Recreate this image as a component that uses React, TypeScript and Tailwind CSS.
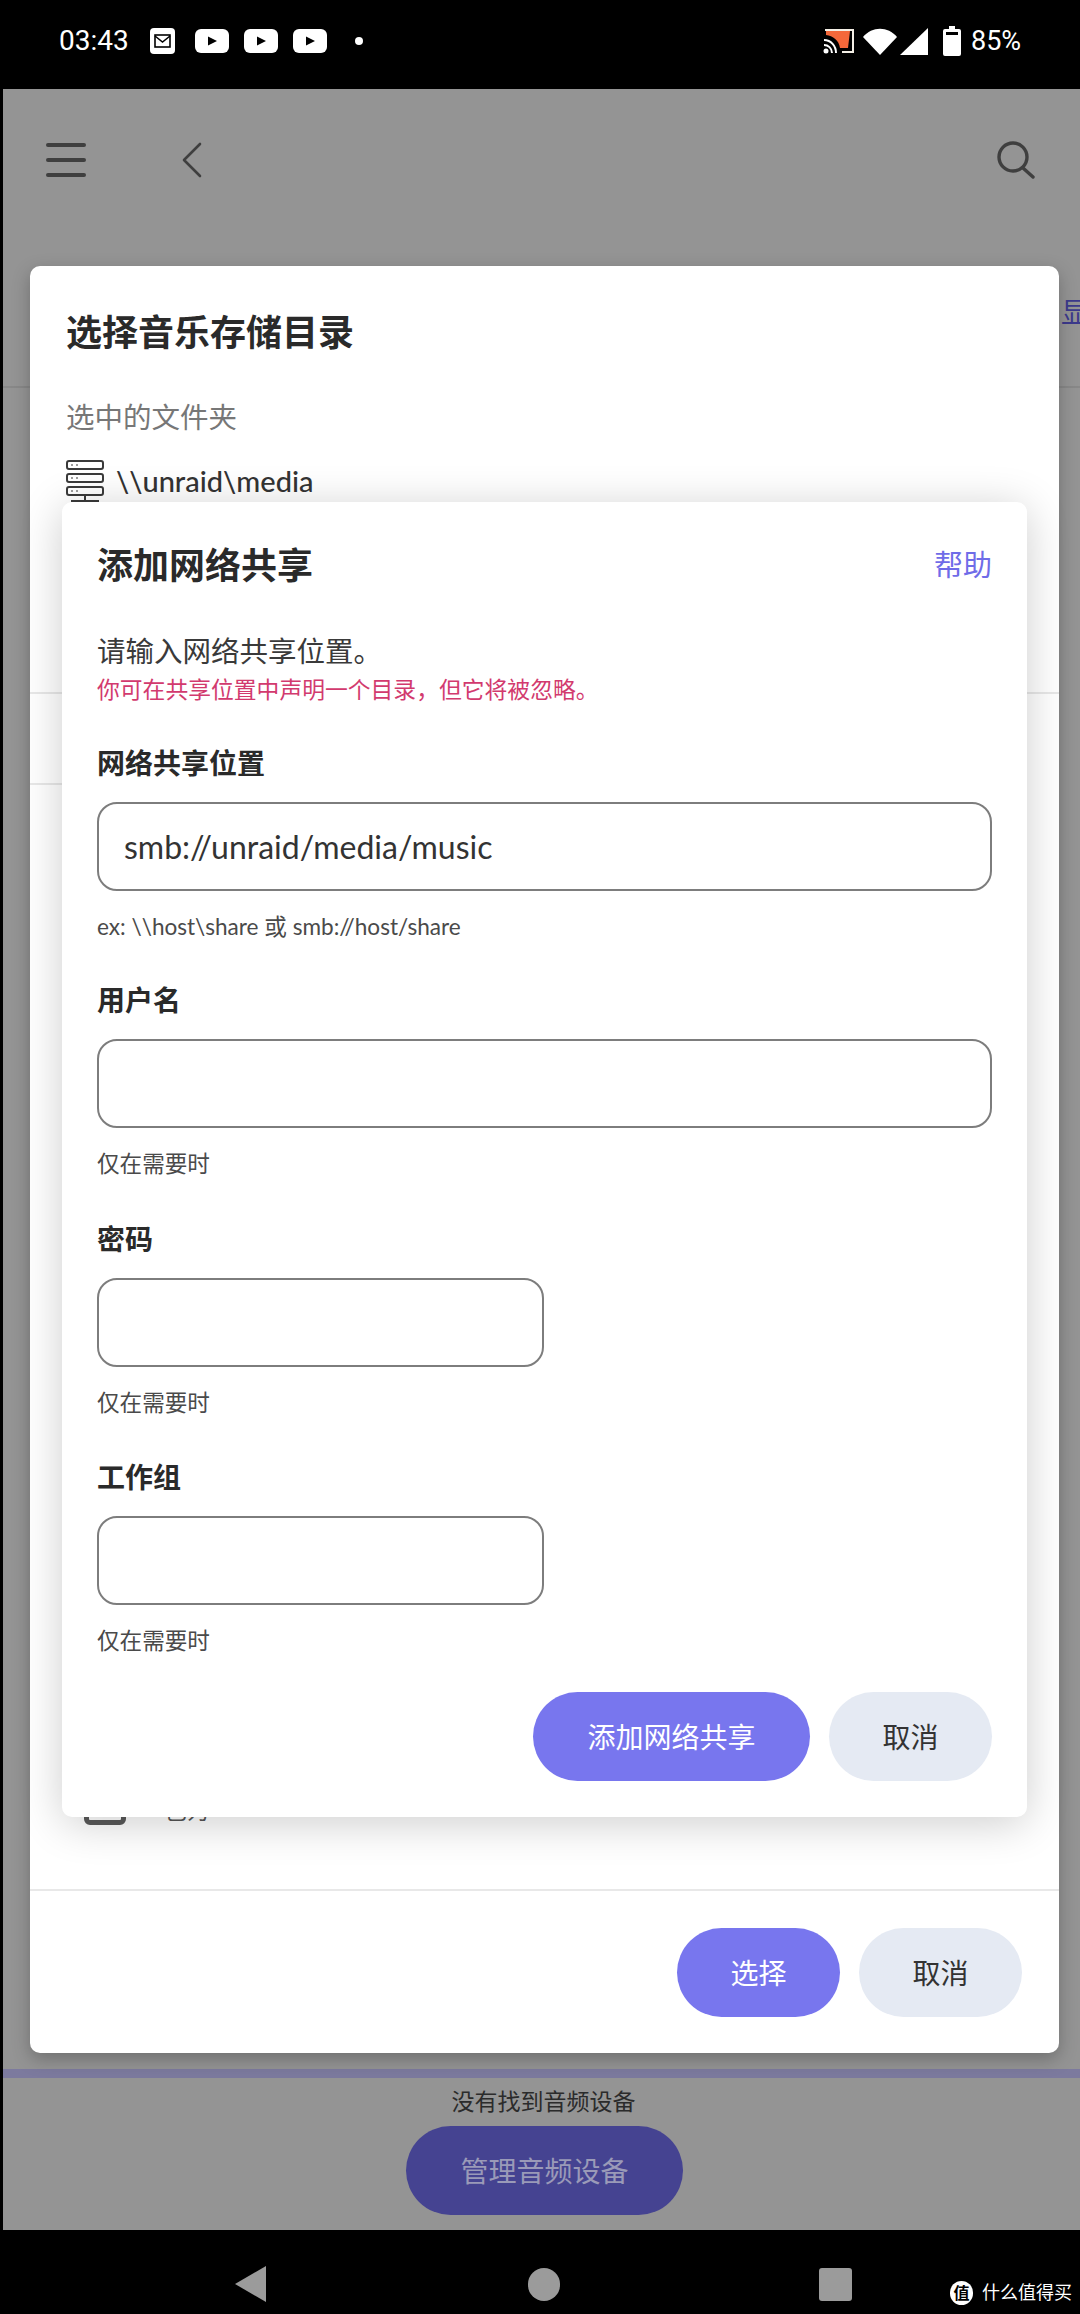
import React from "react";

const FONT = "font-['Lato','Noto_Sans_CJK_SC',sans-serif]";

function YoutubeIcon() {
  return (
    <svg width="34" height="24" viewBox="0 0 34 24">
      <rect width="34" height="24" rx="6" fill="#fff" />
      <path d="M13 7.5 L22 12 L13 16.5 Z" fill="#000" />
    </svg>
  );
}

function StatusBar() {
  return (
    <div className="h-[89px] shrink-0 flex items-center pl-[59px] pr-[57px] pb-[7px] text-white font-['Roboto',sans-serif]">
      <span className="w-[67px] text-[28px] leading-none whitespace-nowrap">03:43</span>
      <svg className="ml-[24px]" width="25" height="26" viewBox="0 0 25 26">
        <rect width="25" height="26" rx="4" fill="#fff" />
        <rect x="5" y="7" width="15" height="12" fill="none" stroke="#000" strokeWidth="1.6" />
        <path d="M5 8 L12.5 14 L20 8" fill="none" stroke="#000" strokeWidth="1.6" />
      </svg>
      <div className="ml-[20px] flex gap-[15px]">
        <YoutubeIcon />
        <YoutubeIcon />
        <YoutubeIcon />
      </div>
      <div className="ml-[28px] w-[8px] h-[8px] rounded-full bg-white" />
      <div className="ml-auto flex items-center">
        <svg width="31" height="26" viewBox="0 0 31 26">
          <path d="M2 2 H30 V24 H19" fill="none" stroke="#f4efe6" strokeWidth="2" />
          <path d="M3 3 H27 L25 20 H17 C16 12 10 8 3 7 Z" fill="#f4683a" />
          <path d="M1 12 C8 12 13 18 13 25 M1 17 C5 17 9 20 9 25" fill="none" stroke="#fff" strokeWidth="2" />
          <circle cx="3" cy="23" r="2.5" fill="#fff" />
        </svg>
        <svg className="ml-[9px]" width="34" height="27" viewBox="0 0 34 27">
          <path d="M0 9 C9 -2 25 -2 34 9 L17 27 Z" fill="#fff" />
        </svg>
        <svg className="ml-[3px]" width="28" height="27" viewBox="0 0 28 27">
          <path d="M28 0 V27 H0 Z" fill="#fff" />
        </svg>
        <svg className="ml-[15px]" width="18" height="30" viewBox="0 0 18 30">
          <path d="M6 0 H12 V3 H16 Q18 3 18 5 V28 Q18 30 16 30 H2 Q0 30 0 28 V5 Q0 3 2 3 H6 Z" fill="#fff" />
          <rect x="3" y="6" width="12" height="3" fill="#000" />
        </svg>
        <span className="ml-[10px] w-[52px] text-[27px] leading-none whitespace-nowrap">85%</span>
      </div>
    </div>
  );
}

function ServerIcon() {
  return (
    <svg width="38" height="42" viewBox="0 0 38 42" fill="none" stroke="#3a3a3a" strokeWidth="2">
      <rect x="1" y="1" width="36" height="8" rx="2" />
      <rect x="1" y="14" width="36" height="8" rx="2" />
      <rect x="1" y="27" width="36" height="8" rx="2" />
      <path d="M19 36 V41 M5 41 H33" />
      <path d="M5 5 H7 M10 5 H12 M5 18 H7 M10 18 H12 M5 31 H7 M10 31 H12" strokeWidth="1" />
    </svg>
  );
}

function PillButton({ label, primary, width }: { label: string; primary?: boolean; width: string }) {
  return (
    <button
      className={`h-[89px] rounded-[45px] text-[28px] ${width} ${
        primary ? "bg-[#7876ee] text-white" : "bg-[#e5eaf3] text-[#333333]"
      }`}
    >
      {label}
    </button>
  );
}

function Field({
  label,
  hint,
  value,
  inputWidth,
  className,
}: {
  label: string;
  hint: string;
  value?: string;
  inputWidth: string;
  className: string;
}) {
  return (
    <div className={className}>
      <div className="text-[28px] leading-[36px] font-semibold text-[#2a2a2a]">{label}</div>
      <div
        className={`mt-[21px] h-[89px] border-2 border-[#7d7d7d] rounded-[20px] pl-[25px] flex items-center text-[32px] text-[#333333] ${inputWidth}`}
      >
        {value}
      </div>
      <div className="mt-[21px] text-[22.6px] leading-[30px] text-[#4a4a4a]">{hint}</div>
    </div>
  );
}

function AddShareDialog() {
  return (
    <div className="absolute left-[32px] top-[236px] w-[965px] h-[1315px] bg-white rounded-[10px] px-[35px] pt-[38px] shadow-[0_6px_44px_rgba(0,0,0,0.2)]">
      <div className="flex items-center justify-between h-[50px]">
        <span className="text-[36px] font-semibold text-[#2a2a2a]">添加网络共享</span>
        <span className="text-[29px] text-[#6f6ce8]">帮助</span>
      </div>
      <div className="mt-[43px] text-[28.5px] leading-[36px] text-[#3a3a3a]">请输入网络共享位置。</div>
      <div className="mt-[5px] text-[22.8px] leading-[30px] text-[#d23a6e]">你可在共享位置中声明一个目录，但它将被忽略。</div>
      <Field
        className="mt-[41px]"
        label="网络共享位置"
        value="smb://unraid/media/music"
        hint="ex: \\host\share 或 smb://host/share"
        inputWidth="w-full"
      />
      <Field className="mt-[40px]" label="用户名" hint="仅在需要时" inputWidth="w-full" />
      <Field className="mt-[42px]" label="密码" hint="仅在需要时" inputWidth="w-[447px]" />
      <Field className="mt-[41px]" label="工作组" hint="仅在需要时" inputWidth="w-[447px]" />
      <div className="mt-[36px] flex justify-end gap-[19px]">
        <PillButton label="添加网络共享" primary width="w-[277px]" />
        <PillButton label="取消" width="w-[163px]" />
      </div>
    </div>
  );
}

function FolderDialog() {
  return (
    <div className="absolute left-[30px] top-[266px] w-[1029px] h-[1787px] bg-white rounded-[10px] flex flex-col shadow-[0_6px_18px_rgba(0,0,0,0.25)]">
      <div className="px-[36px] pt-[41px]">
        <div className="h-[50px] flex items-center text-[36px] font-semibold text-[#2a2a2a]">选择音乐存储目录</div>
        <div className="mt-[42px] text-[28.5px] leading-[36px] text-[#777777]">选中的文件夹</div>
        <div className="mt-[25px] flex items-center gap-[12px] h-[42px]">
          <ServerIcon />
          <span className="text-[29px] font-medium text-[#333333]">\\unraid\media</span>
        </div>
      </div>
      <div className="h-[192px] border-b-2 border-[#e8e8e8]" />
      <div className="h-[91px] mr-[600px] border-b-2 border-[#e8e8e8]" />
      <div className="mt-auto mb-[64px] ml-[54px] flex items-end gap-[39px]">
        <div className="w-[42px] h-[42px] border-[5px] border-[#5a5a5a] rounded-[6px]" />
        <span className="text-[22px] leading-[28px] text-[#555555]">已为</span>
      </div>
      <div className="h-[164px] border-t-2 border-[#e8e8e8] pt-[37px] pr-[37px] flex justify-end gap-[19px]">
        <PillButton label="选择" primary width="w-[163px]" />
        <PillButton label="取消" width="w-[163px]" />
      </div>
      <AddShareDialog />
    </div>
  );
}

function NavBar() {
  return (
    <div className="h-[84px] shrink-0 flex items-center pt-[24px] relative">
      <svg className="ml-[235px]" width="31" height="36" viewBox="0 0 31 36">
        <path d="M31 0 V36 L0 18 Z" fill="#9b9b9b" />
      </svg>
      <div className="ml-[262px] w-[32px] h-[33px] rounded-full bg-[#9b9b9b]" />
      <div className="ml-[259px] w-[33px] h-[33px] rounded-[3px] bg-[#9b9b9b]" />
      {/* 水印 */}
      <div className="absolute left-[950px] top-[49px] flex items-center gap-[9px]">
        <div className="w-[23px] h-[24px] rounded-full bg-white flex items-center justify-center text-[16px] leading-none font-bold text-black">
          值
        </div>
        <span className="text-[18px] text-white whitespace-nowrap">什么值得买</span>
      </div>
    </div>
  );
}

export default function App() {
  return (
    <div className={`relative w-[1080px] h-[2314px] bg-black flex flex-col overflow-hidden ${FONT}`}>
      <StatusBar />
      <div className="flex-1 ml-[3px] bg-[#949494] flex flex-col">
        <div className="h-[299px] shrink-0 border-b-2 border-[#888888]">
          <div className="flex items-center h-[40px] mt-[51px] pl-[43px] pr-[45px]">
            <svg width="40" height="36" viewBox="0 0 40 36" stroke="#3f3f3f" strokeWidth="4" strokeLinecap="round">
              <path d="M2 3 H38 M2 18 H38 M2 33 H38" />
            </svg>
            <svg className="ml-[96px]" width="20" height="36" viewBox="0 0 20 36" fill="none" stroke="#3f3f3f" strokeWidth="2.6" strokeLinecap="round" strokeLinejoin="round">
              <path d="M18 2 L2 18 L18 34" />
            </svg>
            <svg className="ml-auto" width="38" height="38" viewBox="0 0 38 38" fill="none" stroke="#3f3f3f" strokeWidth="3.4" strokeLinecap="round">
              <circle cx="16" cy="16" r="14" />
              <path d="M26 27 L36 36" />
            </svg>
          </div>
          <div className="mt-[114px] pl-[1058px] text-[28px] leading-[36px] text-[#3c3a8c] whitespace-nowrap">显示</div>
        </div>
        <div className="mt-auto h-[9px] bg-[#7c7a9e]" />
        <div className="mt-[8px] text-center pl-[4px] text-[23px] leading-[30px] text-[#2b2b2b]">没有找到音频设备</div>
        <div className="mt-[10px] mb-[15px] flex justify-center pl-[6px]">
          <button className="w-[277px] h-[89px] rounded-[45px] bg-[#454391] text-[28px] text-[#9a9ab8]">管理音频设备</button>
        </div>
      </div>
      <NavBar />
      <div className="absolute inset-0">
        <FolderDialog />
      </div>
    </div>
  );
}
